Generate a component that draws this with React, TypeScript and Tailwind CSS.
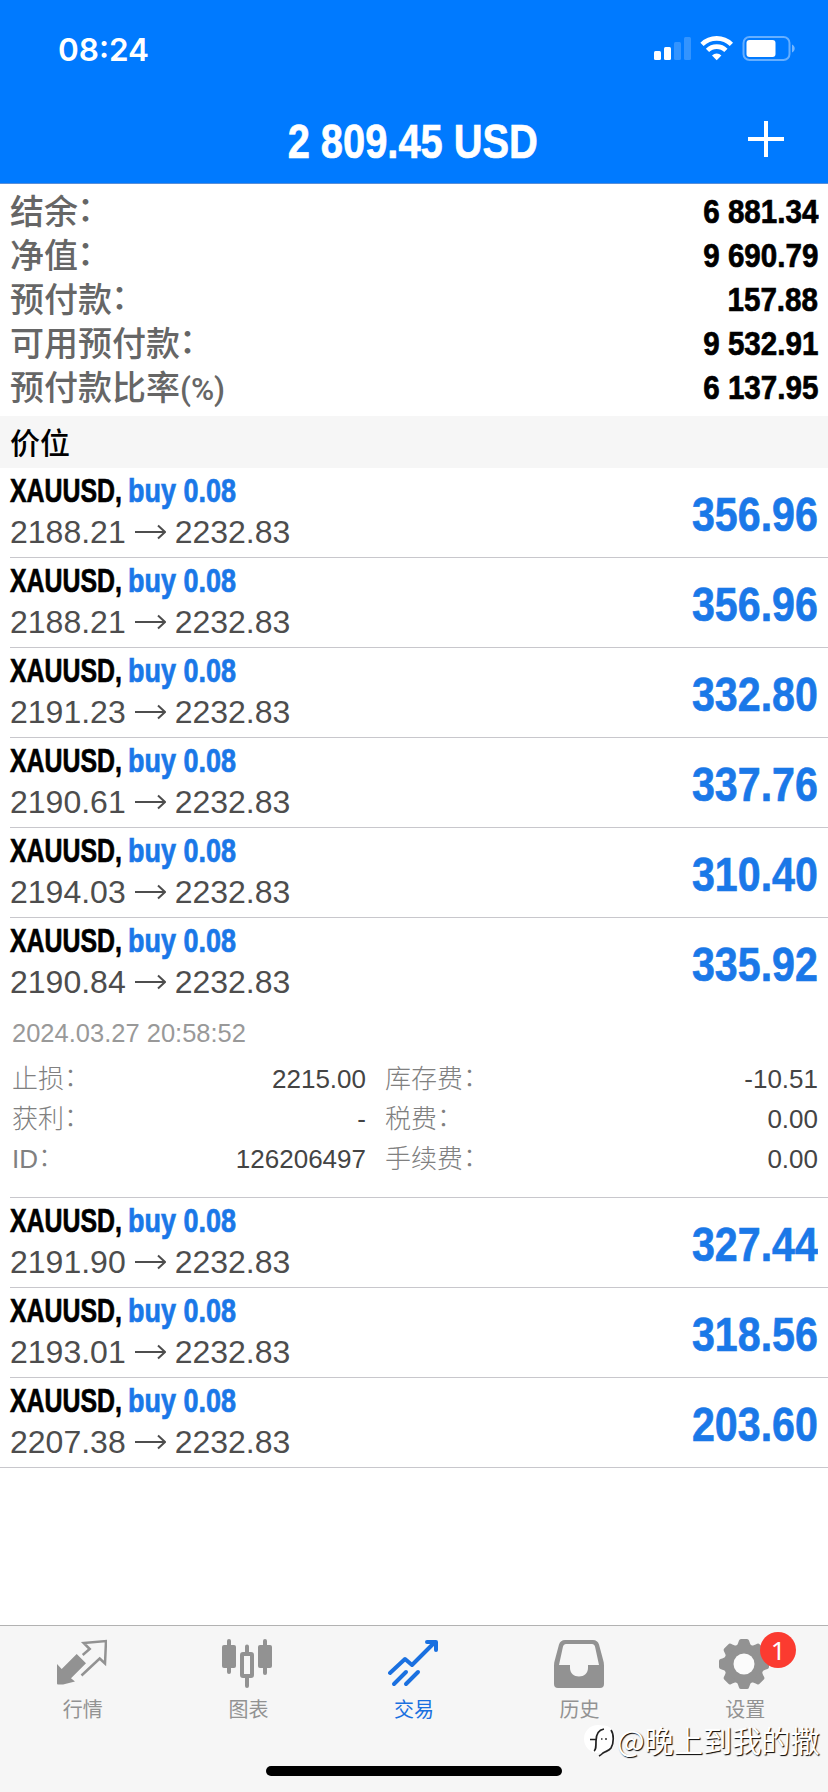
import type { ReactNode } from "react";

const condensed = "inline-block font-bold whitespace-nowrap [-webkit-text-stroke:0.7px_currentColor]";
const cjk = "font-['Noto_Sans_CJK_SC',sans-serif]";

const summary = [
  { label: "结余", value: "6 881.34" },
  { label: "净值", value: "9 690.79" },
  { label: "预付款", value: "157.88" },
  { label: "可用预付款", value: "9 532.91" },
  { label: "预付款比率", unit: "(%)", value: "6 137.95" },
];

interface Position {
  id: number;
  open: string;
  profit: string;
  expanded?: boolean;
}

const positions: Position[] = [
  { id: 1, open: "2188.21", profit: "356.96" },
  { id: 2, open: "2188.21", profit: "356.96" },
  { id: 3, open: "2191.23", profit: "332.80" },
  { id: 4, open: "2190.61", profit: "337.76" },
  { id: 5, open: "2194.03", profit: "310.40" },
  { id: 6, open: "2190.84", profit: "335.92", expanded: true },
  { id: 7, open: "2191.90", profit: "327.44" },
  { id: 8, open: "2193.01", profit: "318.56" },
  { id: 9, open: "2207.38", profit: "203.60" },
];

const details = [
  ["止损", "2215.00", "库存费", "-10.51"],
  ["获利", "-", "税费", "0.00"],
  ["ID", "126206497", "手续费", "0.00"],
];

function StatusIcons() {
  return (
    <svg className="relative top-[1px]" width="144" height="28" viewBox="0 0 144 28" fill="white">
      <rect x="1" y="15" width="7" height="9" rx="1.5" />
      <rect x="11" y="11" width="7" height="13" rx="1.5" />
      <rect x="21" y="6" width="7" height="18" rx="1.5" opacity="0.2" />
      <rect x="31" y="1" width="7" height="23" rx="1.5" opacity="0.2" />
      <g fill="none" stroke="white" strokeWidth="4.600">
        <path d="M49 8.400a21 21 0 0 1 29.400 0" />
        <path d="M54.500 14.400a13 13 0 0 1 18.400 0" />
      </g>
      <path d="M63.700 24.200l-4.700-4.700a6.800 6.800 0 0 1 9.400 0z" />
      <rect x="90.500" y="1" width="46" height="23" rx="6" fill="none" stroke="white" strokeWidth="2" opacity="0.4" />
      <rect x="93.500" y="4" width="29" height="17" rx="3" />
      <path d="M139 8.500c3.600 1.500 3.600 6.500 0 8z" opacity="0.45" />
    </svg>
  );
}

function Header() {
  return (
    <header className="h-[184px] bg-[#007aff] border-b border-[#5a8fd8] text-white">
      <div className="h-[98px] pl-[58px] pr-[31px] flex items-center justify-between">
        <span className="pt-[1px] font-['Inter',sans-serif] font-semibold text-[31.500px] leading-none">08:24</span>
        <StatusIcons />
      </div>
      <div className="h-[82px] pl-[78px] pr-[43px] flex items-center justify-between">
        <h1 className="flex-1 pt-[5px] text-center">
          <span className={`${condensed} text-[48px] leading-none scale-x-[0.83]`}>2 809.45 USD</span>
        </h1>
        <svg width="38" height="38" viewBox="0 0 38 38" stroke="white" strokeWidth="4">
          <path d="M19 1v36M1 19h36" />
        </svg>
      </div>
    </header>
  );
}

function PositionRow({ position, last }: { position: Position; last: boolean }) {
  return (
    <li className={`border-b border-[#c8c7cc] pr-[10px] ${last ? "pl-[10px]" : "ml-[10px]"}`}>
      <div className="h-[89px] flex items-center justify-between">
        <div className="pb-[2px]">
          <div className="flex text-[32.500px] h-[41px] leading-[40px] text-black">
            <span className="w-[118px]">
              <span className={`${condensed} origin-left scale-x-[0.765]`}>XAUUSD,</span>
            </span>
            <span className={`${condensed} origin-left scale-x-[0.83] text-[#1a78e8]`}>buy 0.08</span>
          </div>
          <div className="flex items-center h-[41px] text-[32px] leading-[41px] text-[#4d4d4d]">
            <span>{position.open}</span>
            <svg className="mx-[9px]" width="31" height="16" viewBox="0 0 31 16" fill="none" stroke="#4d4d4d" strokeWidth="2">
              <path d="M0 8h30M23 1.500 30 8l-7 6.500" />
            </svg>
            <span>2232.83</span>
          </div>
        </div>
        <span className={`${condensed} pt-[4px] text-[49px] leading-none origin-right scale-x-[0.84] text-[#1a78e8]`}>
          {position.profit}
        </span>
      </div>
      {position.expanded && <PositionDetails />}
    </li>
  );
}

function PositionDetails() {
  return (
    <div className="h-[190px] pl-[2px] text-[25.500px]">
      <div className="h-[52px] leading-[52px] text-[#999]">2024.03.27 20:58:52</div>
      {details.map(([label, value, label2, value2]) => (
        <div key={label} className="flex h-[40px] leading-[40px]">
          <DetailLabel>{label}</DetailLabel>
          <span className="w-[249px] text-right text-[26px] text-[#444]">{value}</span>
          <span className="w-[19px]" />
          <DetailLabel>{label2}</DetailLabel>
          <span className="flex-1 text-right text-[26px] text-[#444]">{value2}</span>
        </div>
      ))}
    </div>
  );
}

function DetailLabel({ children }: { children: ReactNode }) {
  return (
    <span className="w-[105px] whitespace-nowrap font-light text-[26px] text-[#808080] font-['Liberation_Sans','Noto_Sans_CJK_SC',sans-serif]">
      {children}
      <span className="relative -top-[2px]">：</span>
    </span>
  );
}

function QuotesIcon() {
  return (
    <svg width="50" height="50" viewBox="0 0 50 50">
      <path d="M0 25l4.700 5 15-15 9.300 9.300-15 15 4 3.200-12 3H1q-1 0-1-1z" fill="#929292" />
      <path d="M25.700 16l7-6-6-6L49 2l-1 22.500-5.300-5L24.500 36.500" fill="none" stroke="#929292" strokeWidth="2.500" />
    </svg>
  );
}

function ChartIcon() {
  return (
    <svg width="50" height="50" viewBox="0 0 50 50" fill="#929292">
      <rect x="0" y="6" width="14" height="23" rx="2" />
      <rect x="5" y="0" width="4" height="35" rx="2" />
      <rect x="36" y="6" width="14" height="23" rx="2" />
      <rect x="41" y="0" width="4" height="36" rx="2" />
      <rect x="20" y="15" width="10" height="22" rx="1" fill="none" stroke="#929292" strokeWidth="4" />
      <path d="M23 7.500a2 2 0 0 1 4 0V13h-4zM23 39h4v8a2 2 0 0 1-4 0z" />
    </svg>
  );
}

function TradeIcon() {
  return (
    <svg width="50" height="50" viewBox="0 0 50 50" fill="none" stroke="#1a70e0" strokeWidth="4" strokeLinecap="round" strokeLinejoin="round">
      <path d="M2 34 17 20l7 6L47 3M39 3h9v8" />
      <path d="M6 45l12-12M18 45l12-12" />
    </svg>
  );
}

function HistoryIcon() {
  return (
    <svg width="50" height="50" viewBox="0 0 50 50" fill="#929292">
      <path
        fillRule="evenodd"
        d="M11 1h28c3 0 5 1.500 6 4.500l4 15c.7 2 1 4 1 6V45a4 4 0 0 1-4 4H4a4 4 0 0 1-4-4V26.500c0-2 .3-4 1-6l4-15C6 2.500 8 1 11 1zM12 5c-1.500 0-2.500 1-3 2.500L5 26h11v3c0 5 4 8.500 9 8.500s9-3.500 9-8.500v-3h11L41 7.500C40.500 6 39.500 5 38 5z"
      />
    </svg>
  );
}

function SettingsIcon() {
  return (
    <svg width="50" height="50" viewBox="-25 -25 50 50">
      <g fill="#929292">
        <circle r="20" />
        {[0, 45, 90, 135, 180, 225, 270, 315].map((angle) => (
          <path key={angle} d="M-9-17C-6-19-6-21-5-23.500Q-4.500-25-3-25H3Q4.500-25 5-23.500C6-21 6-19 9-17z" transform={`rotate(${angle})`} />
        ))}
      </g>
      <circle r="10.500" fill="#fbfbfb" />
    </svg>
  );
}

const tabs = [
  { label: "行情", icon: <QuotesIcon /> },
  { label: "图表", icon: <ChartIcon /> },
  { label: "交易", icon: <TradeIcon />, active: true },
  { label: "历史", icon: <HistoryIcon /> },
  { label: "设置", icon: <SettingsIcon />, badge: 1 },
];

function TabBar() {
  return (
    <nav className="relative h-[167px] bg-[#f6f6f6] border-t border-[#b2b2b2]">
      <div className="grid grid-cols-5 pt-[13px]">
        {tabs.map((tab) => (
          <div key={tab.label} className="flex flex-col items-center">
            <div className="relative -left-[1px]">
              {tab.icon}
              {tab.badge && (
                <span className="absolute -top-[7px] left-[41px] size-[36px] rounded-full bg-[#fb3b30] text-white text-center text-[26px] leading-[36px] font-['Noto_Sans',sans-serif]">
                  {tab.badge}
                </span>
              )}
            </div>
            <span className={`${cjk} mt-[5px] text-[20px] leading-[30px] ${tab.active ? "text-[#1a70e0]" : "text-[#929292]"}`}>
              {tab.label}
            </span>
          </div>
        ))}
      </div>
      <div className="absolute left-[266px] bottom-[16px] w-[296px] h-[10px] rounded-full bg-black" />
      <Watermark />
    </nav>
  );
}

function Watermark() {
  return (
    <div className="absolute left-[584px] top-[96px] h-[36px] flex items-center">
      <svg width="33" height="36" viewBox="0 0 33 36" fill="none">
        <circle cx="14" cy="17" r="14" fill="white" />
        <path d="M17 6c7-2 12 3 12 10 0 8-4 12-9 14" stroke="white" strokeWidth="4" />
        <path
          d="M6 17.500h6M10 29c2-1 2-4 2-10 0-7 2-11 8-12M27 8c3 4 3 13 0 18-2 3-5 3-8 5-1 1-2 2-4 3"
          stroke="#222"
          strokeWidth="1.700"
        />
        <path d="M17 17h1.500M21 17h2" stroke="#333" strokeWidth="1.500" />
      </svg>
      <span className={`${cjk} relative -top-[1px] text-[29.200px] leading-[36px] whitespace-nowrap text-white [text-shadow:1px_1px_1px_#000]`}>
        @晚上到我的撒
      </span>
    </div>
  );
}

export default function App() {
  return (
    <div className="w-[828px] h-[1792px] flex flex-col overflow-hidden bg-white font-['Liberation_Sans',sans-serif]">
      <Header />
      <section className="pt-[4px] pb-[8px] pl-[10px] pr-[10px]">
        {summary.map((row) => (
          <div key={row.label} className="flex items-center justify-between h-[44px]">
            <span className={`${cjk} h-[44px] font-medium text-[34px] leading-[44px] text-[#666]`}>
              {row.label}
              {row.unit ? (
                <span className="text-[31.500px] leading-none font-['Roboto',sans-serif]">{row.unit}</span>
              ) : (
                <span className="relative -left-[1px] -top-[3px]">：</span>
              )}
            </span>
            <span className={`${condensed} pt-[2px] text-[34px] leading-[40px] origin-right scale-x-[0.87] text-black`}>{row.value}</span>
          </div>
        ))}
      </section>
      <div className={`${cjk} h-[52px] pl-[10px] bg-[#f6f6f6] font-medium text-[30px] leading-[50px] text-black`}>价位</div>
      <ul className="flex-1">
        {positions.map((position, idx) => (
          <PositionRow key={position.id} position={position} last={idx === positions.length - 1} />
        ))}
      </ul>
      <TabBar />
    </div>
  );
}
